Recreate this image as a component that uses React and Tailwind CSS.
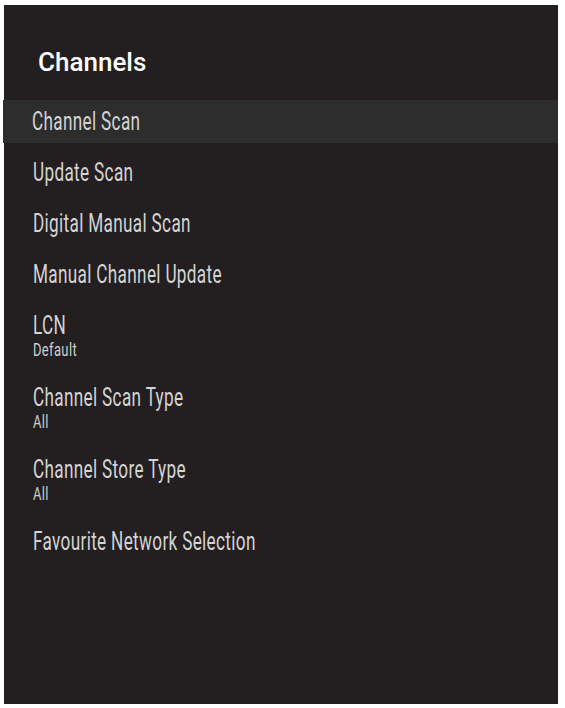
const items = [
    { label: 'Channel Scan', active: true },
    { label: 'Update Scan' },
    { label: 'Digital Manual Scan' },
    { label: 'Manual Channel Update' },
    { label: 'LCN', value: 'Default' },
    { label: 'Channel Scan Type', value: 'All' },
    { label: 'Channel Store Type', value: 'All' },
    { label: 'Favourite Network Selection' },
];

const narrow = { fontFamily: 'Roboto, "Liberation Sans", sans-serif' };

function MenuRow({ label, value, active }) {
    return (
        <div
            className={
                'flex flex-col items-start py-2 pl-[29px] ' +
                (active ? 'bg-[#2e2d2d] -ml-px' : '')
            }
            style={narrow}
        >
            <span className="inline-block origin-left scale-x-[0.66] whitespace-nowrap text-[26px] leading-[27px] tracking-[0.5px] text-[#d4d4d4]">
                {label}
            </span>
            {value && (
                <span className="inline-block origin-left scale-x-[0.72] whitespace-nowrap text-[18px] leading-[21px] tracking-[0.5px] text-[#cfcfcf]">
                    {value}
                </span>
            )}
        </div>
    );
}

export default function App() {
    return (
        <div className="min-h-screen bg-white pt-[5px] pl-[4px] pr-[7px] pb-[4px]">
            <div className="flex h-[699px] flex-col bg-[#231f20]">
                <h1
                    className="pl-[34px] pt-[45px] pb-[26px] text-[26px] font-medium leading-[24px] text-white"
                    style={{ fontFamily: 'Roboto, "Liberation Sans", sans-serif' }}
                >
                    Channels
                </h1>
                <div className="flex flex-col gap-2">
                    {items.map((item) => (
                        <MenuRow key={item.label} {...item} />
                    ))}
                </div>
            </div>
        </div>
    );
}
